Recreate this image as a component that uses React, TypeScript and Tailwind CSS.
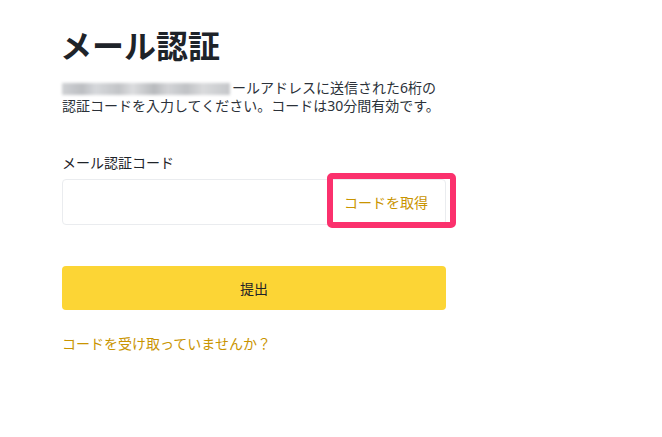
export default function App() {
  return (
    <div
      className="min-h-[437px] w-full bg-white text-[#1e2329]"
      style={{ fontFamily: '"Noto Sans", "Noto Sans CJK JP", sans-serif' }}
    >
      <div className="w-[384px] ml-[62px] pt-[26px]">
        <h1 className="-ml-[2px] text-[32px] leading-[40px] font-bold text-[#1e2329]">メール認証</h1>

        <p className="mt-[13px] text-[14px] leading-[18px] text-[#2b3139]">
          <span className="inline-block align-middle w-[168px] h-[12px] mr-[2px] blur-[1.5px] bg-[linear-gradient(90deg,#cfd1d4_0%,#bcbec2_12%,#d6d8db_20%,#c2c4c7_34%,#dcdddf_42%,#b8babd_55%,#d3d4d7_63%,#c0c2c5_74%,#d9dadc_84%,#c5c7ca_100%)]" />
          ールアドレスに送信された6桁の
          <br />
          認証コードを入力してください。コードは30分間有効です。
        </p>

        <label className="block mt-[38px] text-[14px] leading-[20px] text-[#1e2329]">メール認証コード</label>

        <div className="relative mt-[6px] h-[46px] flex items-center border border-[#eaecef] rounded-[4px]">
          <input className="flex-1 h-full px-3 bg-transparent outline-none text-[14px]" />
          <button className="h-full pl-4 pr-[17px] text-[14px] text-[#c99400]">コードを取得</button>
          {/* highlight annotation */}
          <div className="absolute left-[264px] -right-[11px] -top-[7px] -bottom-[4px] border-[6px] border-[#fb316d] rounded-[5px] pointer-events-none" />
        </div>

        <button className="mt-[41px] w-full h-[44px] rounded-[4px] bg-[#fcd535] text-[14px] text-[#1e2329]">
          提出
        </button>

        <a className="block mt-[24px] text-[14px] leading-[20px] text-[#c99400]">コードを受け取っていませんか？</a>
      </div>
    </div>
  );
}
